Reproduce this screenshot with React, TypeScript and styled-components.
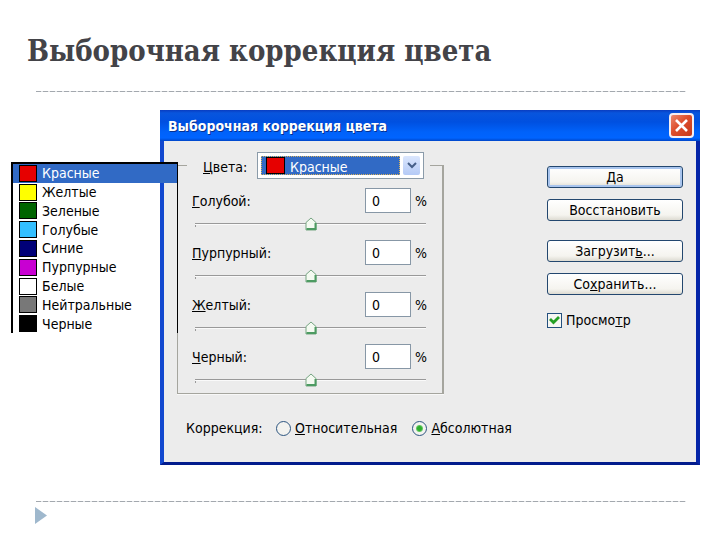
import React, { useState } from "react";
import styled, { createGlobalStyle } from "styled-components";

const GlobalStyle = createGlobalStyle`
  * { box-sizing: border-box; }
  body { margin: 0; background: #fff; }
`;

const uiFont = `"DejaVu Sans Condensed", "DejaVu Sans", sans-serif`;

const thumb = `url("data:image/svg+xml,${encodeURIComponent(
  `<svg xmlns='http://www.w3.org/2000/svg' width='12' height='14' viewBox='0 0 12 14'><path d='M1 5.5 6 1l5 4.5V13H1z' fill='#f4faf1' stroke='#76a582'/><path d='M1.5 12h9M10.5 6v7' stroke='#4d9b62' stroke-width='2' fill='none'/></svg>`
)}")`;

const Slide = styled.main`
  min-height: 100vh;
  display: flex;
  flex-direction: column;
  color: #000;
  font: 14px/20px ${uiFont};
`;

const Heading = styled.h1`
  margin: 0;
  padding: 30px 27px 0;
  height: 91px;
  font: bold 29px/42px "DejaVu Serif Condensed", "DejaVu Serif", serif;
  color: #434348;
  white-space: nowrap;
`;

const Rule = styled.hr`
  width: auto;
  height: 1px;
  margin: 0 34px 0 36px;
  border: 0;
  background: repeating-linear-gradient(90deg, #a3a8ae 0 5px, #e4e6e8 5px 7px);
`;

const Stage = styled.section`
  position: relative;
  padding: 18px 20px 36px 160px;
`;

const Dialog = styled.section`
  border: solid #0a3fc4;
  border-width: 0 4px 3px;
  border-right-color: #0525a8;
  border-bottom-color: #021b8c;
  border-left-color: #1248cf;
  background: #ececec;
`;

const TitleBar = styled.header`
  display: flex;
  align-items: center;
  justify-content: space-between;
  height: 31px;
  margin: 0 -4px;
  padding: 0 6px 0 8px;
  background: linear-gradient(#0a3cc0 0, #0855dd 3px, #0050e0 12px, #0062fa 22px, #0064ff 28px, #0046c8 31px);
`;

const DialogTitle = styled.h2`
  margin: 0;
  font: bold 14px/20px ${uiFont};
  color: #fff;
  text-shadow: 1px 1px #06308f;
  white-space: nowrap;
`;

const CloseButton = styled.button`
  display: grid;
  place-items: center;
  width: 25px;
  height: 25px;
  padding: 0;
  border: 2px solid #f5eef2;
  border-radius: 4px;
  background: linear-gradient(135deg, #ec8a70, #dd4d2b 45%, #c4391b);
`;

const Content = styled.div`
  display: grid;
  grid-template-columns: minmax(0, 267px) 136px;
  justify-content: space-between;
  padding: 11px 13px 0;
`;

const Group = styled.fieldset`
  min-width: 0;
  height: 242px;
  margin: 0;
  padding: 9px 15px 0 14px;
  border: 1px solid #a5a59e;
  border-right-width: 2px;
  box-shadow: 0 1px #f8f8f8;
`;

const Legend = styled.legend`
  display: flex;
  align-items: center;
  margin-left: -5px;
  padding: 0 6px 0 16px;
`;

const LegendLabel = styled.label`
  width: 54px;
  padding-top: 2px;
`;

const Combo = styled.span`
  position: relative;
  display: flex;
  width: 167px;
  height: 27px;
  padding: 3px;
  border: 1px solid #8b9ba9;
  background: #fff;
`;

const ComboSelect = styled.select`
  appearance: none;
  flex: 1;
  min-width: 0;
  padding: 2px 0 0 28px;
  border: 1px dotted #d8b25c;
  border-radius: 0;
  outline: 0;
  background: #316ac5;
  color: #fff;
  font: 14px/17px ${uiFont};
`;

const ComboSwatch = styled.span<{ $color: string }>`
  position: absolute;
  left: 8px;
  top: 4px;
  width: 19px;
  height: 17px;
  border: 1px solid #000;
  background: ${(p) => p.$color};
  pointer-events: none;
`;

const ComboArrow = styled.span`
  display: grid;
  place-items: center;
  width: 17px;
  margin-left: 3px;
  border-radius: 2px;
  background: linear-gradient(#dbe6fd, #b4caf6);
`;

const Channel = styled.div`
  display: grid;
  grid-template-columns: 1fr 46px 12px;
  column-gap: 4px;
  align-items: center;
  height: 52px;
  align-content: start;
`;

const Amount = styled.input`
  width: 46px;
  height: 25px;
  padding: 0 0 0 6px;
  border: 1px solid #8797a6;
  background: #fff;
  font: 14px/20px ${uiFont};
`;

const Slider = styled.input`
  grid-column: 1 / -1;
  appearance: none;
  height: 14px;
  margin: 4px 1px 0 3px;
  background: linear-gradient(#999, #999) 0 6px / 100% 1px no-repeat,
    linear-gradient(#fafafa, #fafafa) 0 7px / 100% 1px no-repeat,
    linear-gradient(#999, #999) 0 6px / 1px 4px no-repeat;

  &::-webkit-slider-thumb {
    appearance: none;
    width: 12px;
    height: 14px;
    background: ${thumb} center / 12px 14px no-repeat;
  }
`;

const Actions = styled.div`
  display: flex;
  flex-direction: column;
  gap: 11px;
  padding-top: 14px;
`;

const ActionButton = styled.button<{ $primary?: boolean; $spaced?: boolean }>`
  height: 22px;
  margin: 0 0 ${(p) => (p.$spaced ? 8 : 0)}px;
  padding: 0;
  border: 1px solid #23476f;
  border-radius: 3px;
  background: linear-gradient(#fff, #f5f4ef 75%, #dddbd2);
  box-shadow: ${(p) => (p.$primary ? "inset 0 0 0 2px #a9c5ee" : "none")};
  color: #000;
  font: 14px/18px ${uiFont};
`;

const Choice = styled.label`
  display: flex;
  align-items: center;
  gap: 4px;
  white-space: nowrap;
`;

const PreviewChoice = styled(Choice)`
  margin-top: 4px;
`;

const CheckBox = styled.input`
  appearance: none;
  width: 15px;
  height: 15px;
  margin: 0;
  border: 1px solid #24507e;
  background: #f7f7f3;

  &:checked {
    background: #f7f7f3 url("data:image/svg+xml,${encodeURIComponent(
      `<svg xmlns='http://www.w3.org/2000/svg' viewBox='0 0 13 13'><path d='M2 5 5.5 8.5 11 3' fill='none' stroke='#24a024' stroke-width='2.8'/></svg>`
    )}") center / 13px 13px no-repeat;
  }
`;

const Radio = styled.input`
  appearance: none;
  width: 15px;
  height: 15px;
  margin: 0;
  border: 1px solid #2d5580;
  border-radius: 50%;
  background: #f3f3f0;

  &:checked {
    background: radial-gradient(circle, #2fae2f 0 2px, #62c862 3px, #f3f3f0 4px);
  }
`;

const Method = styled.div`
  display: flex;
  align-items: center;
  padding: 24px 22px 24px;
`;

const MethodLabel = styled.span`
  width: 90px;
`;

const MethodChoices = styled.div`
  display: flex;
  gap: 15px;
`;

const ColorList = styled.ul`
  position: absolute;
  left: 11px;
  top: 70px;
  display: grid;
  grid-auto-rows: 1fr;
  width: 167px;
  height: 171px;
  margin: 0;
  padding: 0;
  border: solid #000;
  border-width: 2px 1px 0 2px;
  list-style: none;
`;

const ColorOption = styled.li<{ $selected: boolean }>`
  display: flex;
  align-items: center;
  gap: 5px;
  min-height: 0;
  padding-left: 6px;
  background: ${(p) => (p.$selected ? "#316ac5" : "transparent")};
  color: ${(p) => (p.$selected ? "#fff" : "#000")};
  line-height: 18px;
`;

const Swatch = styled.span<{ $color: string }>`
  width: 18px;
  height: 17px;
  border: 1px solid #000;
  background: ${(p) => p.$color};
`;

const Footer = styled.footer`
  display: flex;
  padding: 5px 35px;
`;

const colors = [
  ["Красные", "#e60000"],
  ["Желтые", "#ffff00"],
  ["Зеленые", "#006400"],
  ["Голубые", "#33bfff"],
  ["Синие", "#000078"],
  ["Пурпурные", "#c800d2"],
  ["Белые", "#ffffff"],
  ["Нейтральные", "#787878"],
  ["Черные", "#000000"],
];

const channels = ["Голубой", "Пурпурный", "Желтый", "Черный"];

function ChannelRow({ name }: { name: string }) {
  const [value, setValue] = useState(0);
  const id = `channel-${name}`;
  return (
    <Channel>
      <label htmlFor={id}>
        <u>{name[0]}</u>
        {name.slice(1)}:
      </label>
      <Amount id={id} value={value} onChange={(e) => setValue(Number(e.target.value) || 0)} />
      <span>%</span>
      <Slider
        type="range"
        min={-100}
        max={100}
        value={value}
        aria-label={name}
        onChange={(e) => setValue(Number(e.target.value))}
      />
    </Channel>
  );
}

export default function App() {
  const [selected, setSelected] = useState(0);
  return (
    <Slide>
      <GlobalStyle />
      <Heading>Выборочная коррекция цвета</Heading>
      <Rule />
      <Stage>
        <Dialog aria-labelledby="dialog-title">
          <TitleBar>
            <DialogTitle id="dialog-title">Выборочная коррекция цвета</DialogTitle>
            <CloseButton type="button" aria-label="Закрыть">
              <svg width="15" height="15" viewBox="0 0 15 15">
                <path d="M2 2 13 13M13 2 2 13" stroke="#fff" strokeWidth="2.6" />
              </svg>
            </CloseButton>
          </TitleBar>
          <Content>
            <Group>
              <Legend>
                <LegendLabel htmlFor="colors">
                  <u>Ц</u>вета:
                </LegendLabel>
                <Combo>
                  <ComboSelect
                    id="colors"
                    value={selected}
                    onChange={(e) => setSelected(Number(e.target.value))}
                  >
                    {colors.map(([name], i) => (
                      <option key={name} value={i}>
                        {name}
                      </option>
                    ))}
                  </ComboSelect>
                  <ComboSwatch $color={colors[selected][1]} />
                  <ComboArrow>
                    <svg width="10" height="7" viewBox="0 0 10 7">
                      <path d="M1 1 5 5 9 1" fill="none" stroke="#465f88" strokeWidth="2" />
                    </svg>
                  </ComboArrow>
                </Combo>
              </Legend>
              {channels.map((name) => (
                <ChannelRow key={name} name={name} />
              ))}
            </Group>
            <Actions>
              <ActionButton type="button" $primary>
                Да
              </ActionButton>
              <ActionButton type="button" $spaced>
                Восстановить
              </ActionButton>
              <ActionButton type="button">
                Загрузит<u>ь</u>...
              </ActionButton>
              <ActionButton type="button">
                Со<u>х</u>ранить...
              </ActionButton>
              <PreviewChoice>
                <CheckBox type="checkbox" defaultChecked />
                <span>
                  Просмо<u>т</u>р
                </span>
              </PreviewChoice>
            </Actions>
          </Content>
          <Method role="radiogroup" aria-labelledby="method">
            <MethodLabel id="method">Коррекция:</MethodLabel>
            <MethodChoices>
              <Choice>
                <Radio type="radio" name="method" />
                <span>
                  <u>О</u>тносительная
                </span>
              </Choice>
              <Choice>
                <Radio type="radio" name="method" defaultChecked />
                <span>
                  <u>А</u>бсолютная
                </span>
              </Choice>
            </MethodChoices>
          </Method>
        </Dialog>
        <ColorList role="listbox" aria-label="Цвета">
          {colors.map(([name, color], i) => (
            <ColorOption
              key={name}
              role="option"
              aria-selected={i === selected}
              $selected={i === selected}
              onClick={() => setSelected(i)}
            >
              <Swatch $color={color} />
              {name}
            </ColorOption>
          ))}
        </ColorList>
      </Stage>
      <Rule />
      <Footer>
        <svg width="12" height="17" viewBox="0 0 12 17">
          <path d="M0 0 12 8.5 0 17z" fill="#9fb8cd" />
        </svg>
      </Footer>
    </Slide>
  );
}
